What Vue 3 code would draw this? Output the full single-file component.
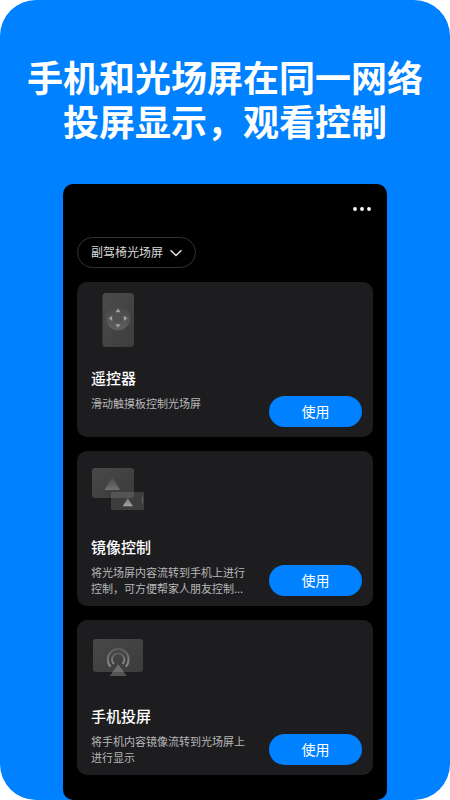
<template>
  <main class="poster">
    <h1 class="headline">手机和光场屏在同一网络<br />投屏显示，观看控制</h1>

    <section class="phone">
      <header class="phone-header">
        <button type="button" class="more-button" aria-label="更多">
          <svg viewBox="0 0 22 20" fill="currentColor">
            <circle cx="4" cy="10" r="1.9" />
            <circle cx="11" cy="10" r="1.9" />
            <circle cx="18" cy="10" r="1.9" />
          </svg>
        </button>
      </header>

      <div class="screen-picker">
        <select v-model="screen" class="screen-select" aria-label="选择屏幕">
          <option v-for="item in screens" :key="item" :value="item">{{ item }}</option>
        </select>
        <svg class="picker-arrow" viewBox="0 0 12 8" fill="none" stroke="currentColor" stroke-width="1.4">
          <path d="M0.6 1.2L6 6.6L11.4 1.2" />
        </svg>
      </div>

      <div class="card-list">
        <article v-for="card in cards" :key="card.id" class="card">
          <!-- 遥控器 -->
          <svg v-if="card.id === 'remote'" class="card-art" viewBox="0 0 56 60">
            <defs>
              <linearGradient id="remote-body" x1="0" y1="0" x2="1" y2="1">
                <stop offset="0" stop-color="#4b4b4b" />
                <stop offset="1" stop-color="#3d3d3e" />
              </linearGradient>
              <linearGradient id="remote-pad" x1="0" y1="0" x2="0" y2="1">
                <stop offset="0" stop-color="#464646" />
                <stop offset="1" stop-color="#606060" />
              </linearGradient>
            </defs>
            <rect x="11.5" y="3" width="31.5" height="54" rx="3.5" fill="url(#remote-body)" />
            <circle cx="27" cy="28.3" r="12" fill="url(#remote-pad)" />
            <circle cx="27" cy="28.3" r="4.5" fill="#505050" />
            <g fill="#a3a3a3">
              <path d="M27 18.6l2.5 3.6h-5z" />
              <path d="M27 37.8l-2.5-3.6h5z" />
              <path d="M17.7 28.3l3.5-2.6v5.2z" />
              <path d="M36.4 28.3l-3.5-2.6v5.2z" />
            </g>
          </svg>

          <!-- 镜像控制 -->
          <svg v-else-if="card.id === 'mirror'" class="card-art" viewBox="0 0 56 60">
            <defs>
              <linearGradient id="mirror-back" x1="0" y1="0" x2="1" y2="1">
                <stop offset="0" stop-color="#494949" />
                <stop offset="1" stop-color="#3a3a3b" />
              </linearGradient>
              <linearGradient id="mirror-hill" x1="0" y1="0" x2="0" y2="1">
                <stop offset="0" stop-color="#484848" />
                <stop offset="1" stop-color="#717171" />
              </linearGradient>
              <linearGradient id="mirror-peak" x1="0" y1="0" x2="0" y2="1">
                <stop offset="0" stop-color="#787878" />
                <stop offset="1" stop-color="#a4a4a4" />
              </linearGradient>
            </defs>
            <rect x="1" y="9" width="42" height="30" rx="3" fill="url(#mirror-back)" />
            <path d="M21.2 18l7.8 13H13.4z" fill="url(#mirror-hill)" />
            <rect x="20" y="33" width="33" height="18" rx="1.5" fill="#3d3d3e" />
            <path d="M20 34.5a1.5 1.5 0 0 1 1.5-1.5H43v3a3 3 0 0 1-3 3H20z" fill="#555555" />
            <path d="M36.8 39.3l5.1 8H31.7z" fill="url(#mirror-peak)" />
            <path d="M51.4 37.5v7" stroke="#6a6a6a" stroke-width="0.8" />
          </svg>

          <!-- 手机投屏 -->
          <svg v-else class="card-art" viewBox="0 0 56 60">
            <defs>
              <linearGradient id="cast-body" x1="0" y1="0" x2="1" y2="1">
                <stop offset="0" stop-color="#484848" />
                <stop offset="1" stop-color="#3c3c3d" />
              </linearGradient>
              <linearGradient id="cast-wave" x1="0" y1="0" x2="0" y2="1">
                <stop offset="0" stop-color="#5c5c5c" />
                <stop offset="1" stop-color="#8c8c8c" />
              </linearGradient>
            </defs>
            <rect x="2" y="11" width="50" height="33" rx="3" fill="url(#cast-body)" />
            <g fill="none" stroke="url(#cast-wave)" stroke-width="2">
              <path d="M19.6 38.6a10.4 10.4 0 1 1 15.2 0" />
              <path d="M22.8 35.9a6.2 6.2 0 1 1 8.8 0" />
            </g>
            <path d="M27.2 36.3L35.7 48h-17z" fill="#555555" />
            <path d="M27.2 36.3L32.8 44H21.6z" fill="#6c6c6c" />
          </svg>

          <h2 class="card-title">{{ card.title }}</h2>
          <div class="card-footer">
            <p class="card-text">{{ card.text }}</p>
            <button type="button" class="use-button">使用</button>
          </div>
        </article>
      </div>
    </section>
  </main>
</template>

<script setup>
import { ref } from 'vue'

const screens = ['副驾椅光场屏']
const screen = ref(screens[0])

const cards = [
  { id: 'remote', title: '遥控器', text: '滑动触摸板控制光场屏' },
  { id: 'mirror', title: '镜像控制', text: '将光场屏内容流转到手机上进行控制，可方便帮家人朋友控制...' },
  { id: 'cast', title: '手机投屏', text: '将手机内容镜像流转到光场屏上进行显示' }
]
</script>

<style>
body {
  margin: 0;
  background-color: #ffffff;
}
</style>

<style scoped>
.poster {
  display: flex;
  flex-direction: column;
  box-sizing: border-box;
  min-height: 100vh;
  padding: 54px 14% 0;
  border-radius: 36px;
  background-color: #0081ff;
  font-family: "Noto Sans CJK SC", sans-serif;
}

.headline {
  align-self: center;
  margin: 0 0 42px;
  color: #ffffff;
  font-size: 36px;
  font-weight: 700;
  line-height: 44px;
  text-align: center;
  white-space: nowrap;
}

.phone {
  flex: 1;
  padding: 15px 14px 25px;
  border-radius: 10px;
  background-color: #000000;
  color: #ffffff;
}

.phone-header {
  display: flex;
  justify-content: flex-end;
  margin-bottom: 18px;
}

.more-button {
  width: 22px;
  height: 20px;
  padding: 0;
  border: none;
  background: none;
  color: #ffffff;
  cursor: pointer;
}

.more-button svg {
  display: block;
}

.screen-picker {
  position: relative;
  width: fit-content;
  margin-bottom: 14px;
}

.screen-select {
  display: block;
  box-sizing: border-box;
  height: 31px;
  padding: 0 31px 2px 13px;
  border: 1px solid #333333;
  border-radius: 16px;
  appearance: none;
  background: none;
  color: #d8d8d8;
  font-family: inherit;
  font-size: 12px;
  cursor: pointer;
}

.picker-arrow {
  position: absolute;
  top: 12px;
  right: 14px;
  width: 12px;
  height: 8px;
  color: #e6e6e6;
  pointer-events: none;
}

.card-list {
  display: flex;
  flex-direction: column;
  gap: 14px;
}

.card {
  padding: 8px 11px 10px 14px;
  border-radius: 10px;
  background-color: #1d1d1f;
}

.card-art {
  display: block;
  width: 56px;
  height: 60px;
  margin-bottom: 17px;
}

.card-title {
  margin: 0 0 6px;
  font-size: 15px;
  font-weight: 500;
  line-height: 22px;
}

.card-footer {
  display: flex;
  align-items: flex-end;
  gap: 16px;
}

.card-text {
  flex: 1;
  min-height: 32px;
  margin: 0;
  color: #b8b8b9;
  font-size: 11px;
  line-height: 16px;
}

.use-button {
  flex-shrink: 0;
  width: 93px;
  height: 31px;
  padding: 0 0 2px;
  border: none;
  border-radius: 16px;
  background-color: #0081ff;
  color: #ffffff;
  font-family: inherit;
  font-size: 14px;
  cursor: pointer;
}
</style>
